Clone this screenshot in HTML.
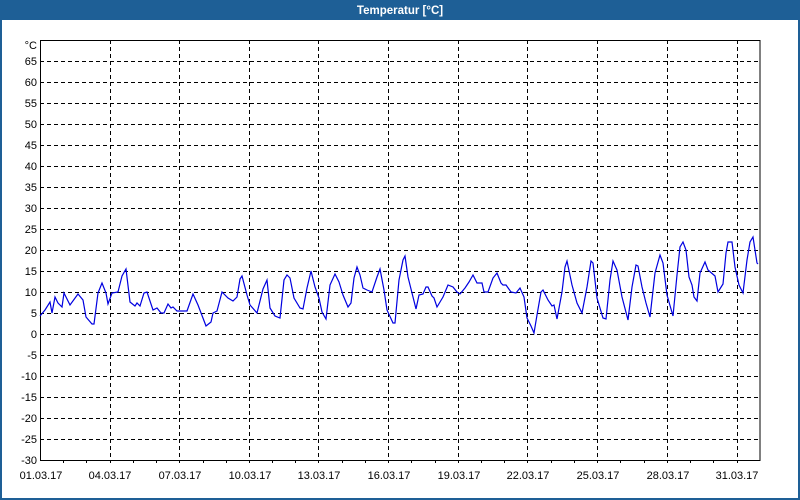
<!DOCTYPE html>
<html><head><meta charset="utf-8"><style>
html,body{margin:0;padding:0;width:800px;height:500px;overflow:hidden;background:#fff}
svg{display:block}
text{font-family:"Liberation Sans","DejaVu Sans",sans-serif;font-size:11px;fill:#000}
</style></head><body>
<svg width="800" height="500" xmlns="http://www.w3.org/2000/svg">
<rect x="0" y="0" width="800" height="500" fill="#1e5f96"/>
<rect x="2" y="20" width="796" height="478" fill="#fff"/>
<text x="400" y="14" text-anchor="middle" style="font-weight:bold;fill:#fff;font-size:11.5px">Temperatur [°C]</text>
<g stroke="#000" stroke-width="1" stroke-dasharray="4,3" shape-rendering="crispEdges">
<line x1="40" x2="760" y1="61.5" y2="61.5"/><line x1="40" x2="760" y1="82.5" y2="82.5"/><line x1="40" x2="760" y1="103.5" y2="103.5"/><line x1="40" x2="760" y1="124.5" y2="124.5"/><line x1="40" x2="760" y1="145.5" y2="145.5"/><line x1="40" x2="760" y1="166.5" y2="166.5"/><line x1="40" x2="760" y1="187.5" y2="187.5"/><line x1="40" x2="760" y1="208.5" y2="208.5"/><line x1="40" x2="760" y1="229.5" y2="229.5"/><line x1="40" x2="760" y1="250.5" y2="250.5"/><line x1="40" x2="760" y1="271.5" y2="271.5"/><line x1="40" x2="760" y1="292.5" y2="292.5"/><line x1="40" x2="760" y1="313.5" y2="313.5"/><line x1="40" x2="760" y1="334.5" y2="334.5"/><line x1="40" x2="760" y1="355.5" y2="355.5"/><line x1="40" x2="760" y1="376.5" y2="376.5"/><line x1="40" x2="760" y1="397.5" y2="397.5"/><line x1="40" x2="760" y1="418.5" y2="418.5"/><line x1="40" x2="760" y1="439.5" y2="439.5"/>
<line y1="40" y2="460" x1="110.5" x2="110.5"/><line y1="40" y2="460" x1="179.5" x2="179.5"/><line y1="40" y2="460" x1="249.5" x2="249.5"/><line y1="40" y2="460" x1="318.5" x2="318.5"/><line y1="40" y2="460" x1="388.5" x2="388.5"/><line y1="40" y2="460" x1="458.5" x2="458.5"/><line y1="40" y2="460" x1="527.5" x2="527.5"/><line y1="40" y2="460" x1="597.5" x2="597.5"/><line y1="40" y2="460" x1="667.5" x2="667.5"/><line y1="40" y2="460" x1="737.5" x2="737.5"/>
</g>
<rect x="40.5" y="40.5" width="719.5" height="420" fill="none" stroke="#000" stroke-width="1" shape-rendering="crispEdges"/>
<g stroke="#000" shape-rendering="crispEdges">
<path d="M63.5 460v3M86.5 460v3M110.5 460v3M133.5 460v3M156.5 460v3M179.5 460v3M203.5 460v3M226.5 460v3M249.5 460v3M272.5 460v3M295.5 460v3M318.5 460v3M342.5 460v3M365.5 460v3M388.5 460v3M411.5 460v3M435.5 460v3M458.5 460v3M481.5 460v3M504.5 460v3M527.5 460v3M551.5 460v3M574.5 460v3M597.5 460v3M620.5 460v3M644.5 460v3M667.5 460v3M690.5 460v3M713.5 460v3M737.5 460v3"/>
</g>
<g text-anchor="end">
<text x="37" y="49">°C</text><text x="37" y="65">65</text><text x="37" y="86">60</text><text x="37" y="107">55</text><text x="37" y="128">50</text><text x="37" y="149">45</text><text x="37" y="170">40</text><text x="37" y="191">35</text><text x="37" y="212">30</text><text x="37" y="233">25</text><text x="37" y="254">20</text><text x="37" y="275">15</text><text x="37" y="296">10</text><text x="37" y="317">5</text><text x="37" y="338">0</text><text x="37" y="359">-5</text><text x="37" y="380">-10</text><text x="37" y="401">-15</text><text x="37" y="422">-20</text><text x="37" y="443">-25</text><text x="37" y="464">-30</text>
</g>
<g text-anchor="middle">
<text x="41" y="479">01.03.17</text><text x="110" y="479">04.03.17</text><text x="180" y="479">07.03.17</text><text x="250" y="479">10.03.17</text><text x="319" y="479">13.03.17</text><text x="389" y="479">16.03.17</text><text x="459" y="479">19.03.17</text><text x="528" y="479">22.03.17</text><text x="598" y="479">25.03.17</text><text x="668" y="479">28.03.17</text><text x="737" y="479">31.03.17</text>
</g>
<polyline fill="none" stroke="#0000e0" stroke-width="1.2" points="40,316 45,310 50,302 52,313 55,297 58,303 62,307 64,293 70,305 78,294 83,300 86,317 92,324 94,324 98,293 102,283 106,293 108,304 112,293 118,292 122,276 126,269 130,302 135,306 137,303 140,306 144,293 147,292 153,310 157,308 161,313 164,313 168,304 171,308 173,307 177,311 187,311 193,294 198,305 206,326 211,322 213,313 217,311 222,292 228,298 233,301 237,297 240,279 242,276 247,295 250,305 257,313 263,289 267,280 270,308 275,316 280,318 284,280 287,275 290,278 294,298 300,308 303,309 307,288 311,271 315,287 319,298 322,312 326,319 330,285 335,274 339,282 343,295 348,307 351,303 354,278 357,267 360,275 363,288 367,290 372,292 377,277 380,269 384,290 387,310 393,323 395,323 399,280 403,260 405,256 408,277 413,297 416,309 419,295 423,294 426,287 428,287 432,296 434,298 437,307 443,297 448,285 453,287 457,292 460,294 465,288 469,282 473,275 477,283 482,283 484,292 488,292 493,278 497,273 501,283 503,285 506,285 511,292 516,293 520,288 524,297 527,318 531,326 534,333 537,315 541,292 543,290 548,300 552,306 554,305 557,319 562,292 565,267 567,261 572,285 577,303 582,313 587,287 591,261 593,263 597,298 603,318 606,319 610,280 613,261 617,270 622,297 628,320 632,287 636,265 638,266 642,287 646,303 650,317 655,273 660,255 663,263 667,295 673,316 677,275 680,247 683,242 686,250 689,277 692,285 694,297 697,301 700,273 705,262 708,270 715,276 718,292 723,284 726,253 728,242 732,242 735,267 739,285 743,293 747,260 750,242 753,237 757,263 758,264"/>
</svg>
</body></html>
